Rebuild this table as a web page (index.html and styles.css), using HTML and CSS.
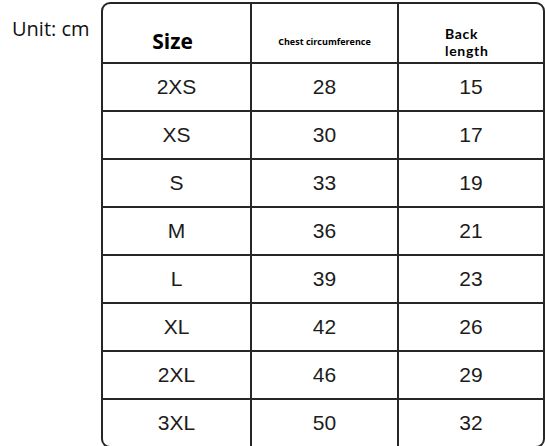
FILE: index.html
```html
<!DOCTYPE html>
<html>
<head>
<meta charset="utf-8">
<link rel="stylesheet" href="styles.css">
</head>
<body>
<div class="page">
  <div class="unit">Unit: cm</div>
  <div class="chart">
    <div class="cell head head-size">Size</div>
    <div class="cell head head-chest">Chest circumference</div>
    <div class="cell head head-back"><span class="line">Back</span><span class="line">length</span></div>

    <div class="cell">2XS</div><div class="cell">28</div><div class="cell">15</div>
    <div class="cell">XS</div><div class="cell">30</div><div class="cell">17</div>
    <div class="cell">S</div><div class="cell">33</div><div class="cell">19</div>
    <div class="cell">M</div><div class="cell">36</div><div class="cell">21</div>
    <div class="cell">L</div><div class="cell">39</div><div class="cell">23</div>
    <div class="cell">XL</div><div class="cell">42</div><div class="cell">26</div>
    <div class="cell">2XL</div><div class="cell">46</div><div class="cell">29</div>
    <div class="cell">3XL</div><div class="cell">50</div><div class="cell">32</div>
  </div>
</div>
</body>
</html>
```

FILE: styles.css
```css
html, body {
  margin: 0;
  padding: 0;
  background: #ffffff;
  overflow: hidden;
}

.page {
  display: flex;
  align-items: flex-start;
  width: 545px;
  height: 446px;
}

.unit {
  width: 101px;
  box-sizing: border-box;
  padding: 17px 0 0 12px;
  font-family: "Open Sans", "Liberation Sans", sans-serif;
  font-size: 20px;
  line-height: 24px;
  color: #111;
  white-space: nowrap;
}

.chart {
  margin-top: 2px;
  display: grid;
  grid-template-columns: 147px 145px 144px;
  grid-template-rows: 58px repeat(8, 46px);
  gap: 2px;
  background: #262626;
  border: 2px solid #262626;
  border-radius: 9px;
  overflow: hidden;
}

.cell {
  background: #ffffff;
  display: flex;
  align-items: center;
  justify-content: center;
  font-family: "Liberation Sans", Arial, sans-serif;
  font-size: 21px;
  color: #1c1c1c;
}

.head {
  font-family: "Open Sans", "Liberation Sans", sans-serif;
  font-weight: 700;
  color: #000;
  box-sizing: border-box;
}

.head-size {
  font-size: 21px;
  padding-right: 8px;
  padding-top: 16px;
}

.head-chest {
  font-size: 9px;
  padding-top: 17px;
}

.head-back {
  flex-direction: column;
  align-items: flex-start;
  font-family: "Lato", "Open Sans", sans-serif;
  font-size: 14px;
  letter-spacing: 0.7px;
  padding-left: 46px;
  padding-top: 17px;
}

.head-back .line {
  display: block;
  height: 17px;
  line-height: 17px;
}
```
